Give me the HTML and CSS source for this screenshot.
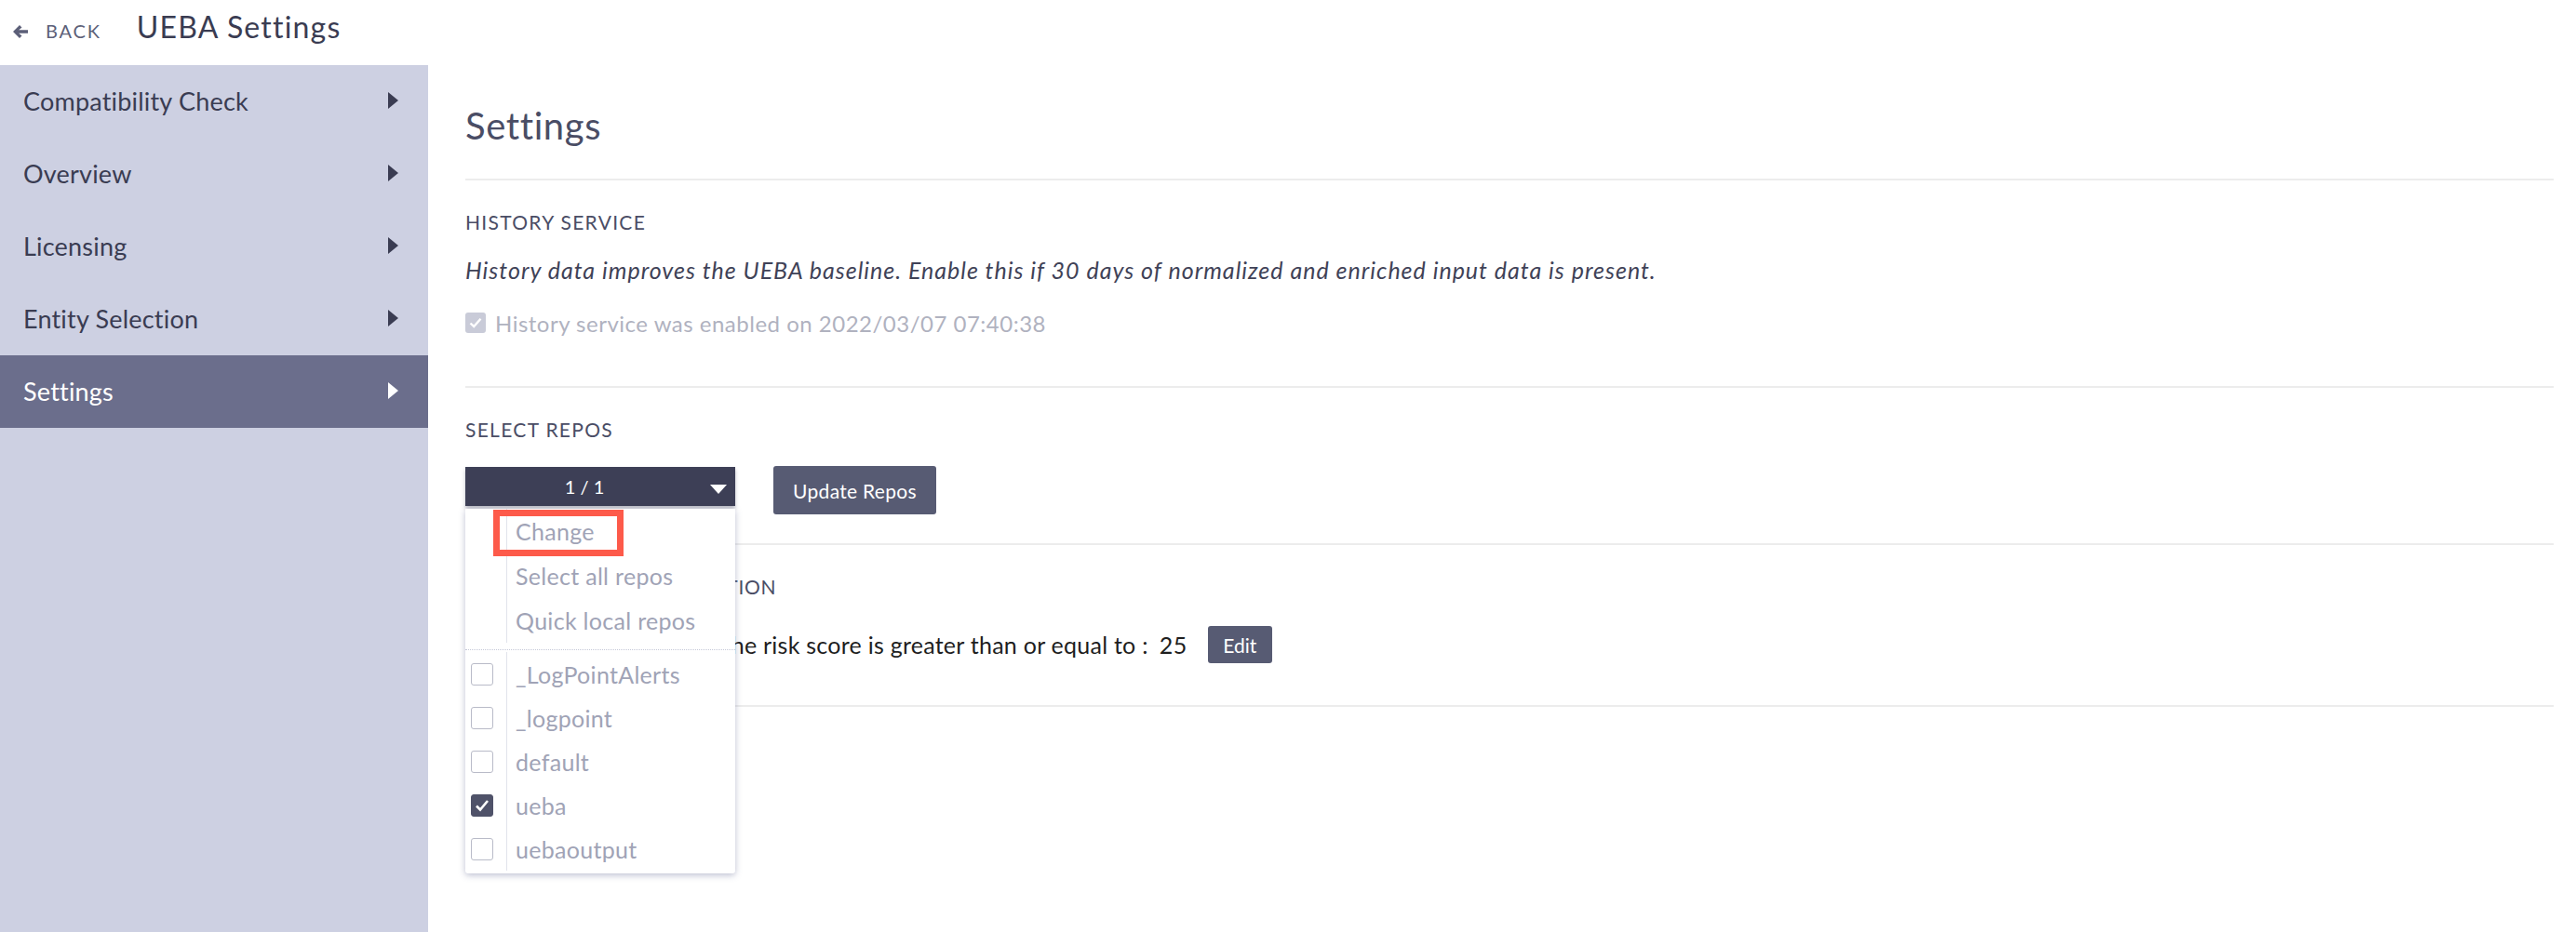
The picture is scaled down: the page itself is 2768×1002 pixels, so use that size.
FILE: index.html
```html
<!DOCTYPE html>
<html>
<head>
<meta charset="utf-8">
<title>UEBA Settings</title>
<link rel="stylesheet" href="styles.css">
</head>
<body>
<header class="topbar">
  <a class="back">
    <svg class="back-icon" width="18" height="16" viewBox="0 0 18 16"><path d="M8 1 L1 8 L8 15 L10.5 12.5 L7.2 9.8 H17 V6.2 H7.2 L10.5 3.5 Z" fill="#5c5f78"/></svg>
    <span class="back-text">BACK</span>
  </a>
  <h1 class="page-title">UEBA Settings</h1>
</header>
<div class="layout">
  <nav class="sidebar">
    <div class="nav-item"><span>Compatibility Check</span><i class="tri"></i></div>
    <div class="nav-item"><span>Overview</span><i class="tri"></i></div>
    <div class="nav-item"><span>Licensing</span><i class="tri"></i></div>
    <div class="nav-item"><span>Entity Selection</span><i class="tri"></i></div>
    <div class="nav-item active"><span>Settings</span><i class="tri"></i></div>
  </nav>
  <main class="main">
    <div class="heading">Settings</div>

    <section class="section s-history">
      <div class="sec-title">HISTORY SERVICE</div>
      <div class="desc">History data improves the UEBA baseline. Enable this if 30 days of normalized and enriched input data is present.</div>
      <div class="check-row">
        <span class="cb disabled"><svg width="14" height="12" viewBox="0 0 14 12"><path d="M1.5 6.5 L5.2 10 L12.5 1.8" fill="none" stroke="#fff" stroke-width="2.4"/></svg></span>
        <span class="check-label">History service was enabled on 2022/03/07 07:40:38</span>
      </div>
    </section>

    <section class="section s-repos">
      <div class="sec-title">SELECT REPOS</div>
      <div class="repo-row">
        <div class="dropdown">
          <div class="dd-btn"><span>1 / 1</span><i class="caret"></i></div>
          <div class="dd-menu">
            <div class="dd-actions">
              <div class="dd-item"><span class="dd-col"></span><span class="dd-label">Change</span></div>
              <div class="dd-item"><span class="dd-col"></span><span class="dd-label">Select all repos</span></div>
              <div class="dd-item"><span class="dd-col"></span><span class="dd-label">Quick local repos</span></div>
              <div class="annot"></div>
            </div>
            <div class="dd-list">
              <div class="dd-repo"><span class="dd-col"><span class="mcb"></span></span><span class="dd-label">_LogPointAlerts</span></div>
              <div class="dd-repo"><span class="dd-col"><span class="mcb"></span></span><span class="dd-label">_logpoint</span></div>
              <div class="dd-repo"><span class="dd-col"><span class="mcb"></span></span><span class="dd-label">default</span></div>
              <div class="dd-repo"><span class="dd-col"><span class="mcb checked"><svg width="16" height="14" viewBox="0 0 16 14"><path d="M2 7.5 L6 11.5 L14 2" fill="none" stroke="#fff" stroke-width="2.6"/></svg></span></span><span class="dd-label">ueba</span></div>
              <div class="dd-repo"><span class="dd-col"><span class="mcb"></span></span><span class="dd-label">uebaoutput</span></div>
            </div>
          </div>
        </div>
        <button class="btn btn-update">Update Repos</button>
      </div>
    </section>

    <section class="section s-alert">
      <div class="sec-title tight">ENTITY ALERT CONFIGURATION</div>
      <div class="alert-row">
        <span class="alert-text"><span class="alert-lead">Generate an alert when t</span>he risk score is greater than or equal to :</span>
        <span class="alert-value">25</span>
        <button class="btn btn-edit">Edit</button>
      </div>
    </section>
  </main>
</div>
</body>
</html>
```

FILE: styles.css
```css
html, body {
  margin: 0;
  padding: 0;
  background: #ffffff;
  height: 1002px;
  overflow: hidden;
}
body {
  font-family: Lato, "Open Sans", "Liberation Sans", sans-serif;
  color: #3a3c52;
}

/* top bar */
.topbar {
  height: 70px;
  box-sizing: border-box;
  display: flex;
  align-items: baseline;
  padding: 9px 0 0 13px;
}
.back {
  display: flex;
  align-items: baseline;
  color: #5c5f78;
}
.back-icon {
  margin-right: 18px;
  position: relative;
  top: 1px;
}
.back-text {
  font-size: 20px;
  letter-spacing: 1.8px;
  line-height: 40px;
}
.page-title {
  margin: 0 0 0 38px;
  font-size: 32px;
  font-weight: 400;
  letter-spacing: 1.2px;
  line-height: 40px;
  color: #3a3c52;
}

/* layout */
.layout {
  display: flex;
  height: 932px;
}
.sidebar {
  width: 460px;
  flex: 0 0 460px;
  background: #cdd0e2;
}
.nav-item {
  height: 78px;
  box-sizing: border-box;
  padding: 0 32px 2px 25px;
  display: flex;
  align-items: center;
  justify-content: space-between;
  font-size: 27px;
  letter-spacing: 0.2px;
  color: #3a3c52;
}
.nav-item .tri {
  width: 0;
  height: 0;
  border-left: 11px solid #3a3c52;
  border-top: 9px solid transparent;
  border-bottom: 9px solid transparent;
}
.nav-item.active {
  background: #6b6e8c;
  color: #ffffff;
}
.nav-item.active .tri {
  border-left-color: #ffffff;
}

/* main */
.main {
  flex: 1;
  padding: 41px 24px 0 40px;
  min-width: 0;
}
.heading {
  font-size: 40px;
  line-height: 48px;
  letter-spacing: 0.6px;
  color: #4a4d65;
  padding-bottom: 33px;
  border-bottom: 2px solid #ececec;
}
.section {
  border-bottom: 2px solid #ececec;
  padding-top: 32px;
}
.sec-title {
  font-size: 21px;
  line-height: 26px;
  color: #4a4d65;
  letter-spacing: 1.3px;
}
.sec-title.tight {
  letter-spacing: 0.75px;
}
.desc {
  margin-top: 23px;
  font-size: 25px;
  line-height: 30px;
  font-style: italic;
  letter-spacing: 1px;
  color: #3f4257;
}
.check-row {
  margin-top: 27px;
  display: flex;
  align-items: center;
  height: 30px;
}
.s-history {
  padding-bottom: 53px;
}
.cb {
  width: 22px;
  height: 22px;
  border-radius: 3px;
  display: flex;
  align-items: center;
  justify-content: center;
  box-sizing: border-box;
}
.cb.disabled {
  background: #c9cbd8;
}
.check-label {
  margin-left: 10px;
  font-size: 24px;
  letter-spacing: 0.5px;
  color: #b0b2bf;
}

/* repos */
.s-repos {
  padding-bottom: 31px;
}
.repo-row {
  margin-top: 26px;
  display: flex;
  align-items: flex-start;
}
.dropdown {
  position: relative;
  width: 290px;
  margin-top: 1px;
}
.dd-btn {
  height: 42px;
  background: #3d3f56;
  color: #ffffff;
  font-size: 20px;
  display: flex;
  align-items: center;
  justify-content: center;
  padding-right: 34px;
  box-shadow: 0 3px 4px rgba(60, 62, 90, 0.35);
  position: relative;
}
.dd-btn .caret {
  position: absolute;
  right: 9px;
  top: 19px;
  width: 0;
  height: 0;
  border-top: 10px solid #ffffff;
  border-left: 9.5px solid transparent;
  border-right: 9.5px solid transparent;
}
.dd-menu {
  position: absolute;
  left: 0;
  top: 45px;
  width: 290px;
  background: #ffffff;
  box-shadow: 0 2px 7px rgba(90, 95, 140, 0.4);
  border-radius: 0 0 3px 3px;
  z-index: 5;
}
.dd-actions {
  position: relative;
  border-bottom: 1px dotted #c5c8d8;
  padding-bottom: 7px;
}
.dd-item, .dd-repo {
  display: flex;
  align-items: center;
  height: 48px;
}
.dd-repo {
  height: 47px;
}
.dd-list {
  padding: 2px 0 3px;
}
.dd-col {
  width: 45px;
  flex: 0 0 45px;
  align-self: stretch;
  border-right: 1px solid #e1e3ec;
  display: flex;
  align-items: center;
  padding-left: 6px;
  box-sizing: border-box;
}
.dd-label {
  padding-left: 9px;
  font-size: 25px;
  letter-spacing: 0.3px;
  color: #a0a3b6;
}
.mcb {
  width: 24px;
  height: 24px;
  box-sizing: border-box;
  border: 1.5px solid #b9bbc8;
  border-radius: 3px;
  display: flex;
  align-items: center;
  justify-content: center;
}
.mcb.checked {
  background: #4f5269;
  border-color: #4f5269;
}
.annot {
  position: absolute;
  left: 30px;
  top: 1px;
  width: 140px;
  height: 50px;
  box-sizing: border-box;
  border: 7px solid #fd5a4a;
}

.btn {
  border: none;
  background: #575b73;
  color: #ffffff;
  font-family: Lato, "Open Sans", "Liberation Sans", sans-serif;
  border-radius: 3px;
  padding: 0;
}
.btn-update {
  margin-left: 41px;
  width: 175px;
  height: 52px;
  font-size: 21px;
  letter-spacing: 0.3px;
}

/* alert section */
.s-alert {
  padding-bottom: 45px;
}
.alert-row {
  margin-top: 29px;
  display: flex;
  align-items: center;
  height: 40px;
}
.alert-text {
  font-size: 25px;
  letter-spacing: 0.25px;
  color: #1e1e1e;
}
.alert-lead {
  letter-spacing: 0.55px;
}
.alert-value {
  font-size: 25px;
  letter-spacing: 0.5px;
  color: #1e1e1e;
  margin-left: 12px;
}
.btn-edit {
  margin-left: 22px;
  width: 69px;
  height: 40px;
  font-size: 21px;
}
```
